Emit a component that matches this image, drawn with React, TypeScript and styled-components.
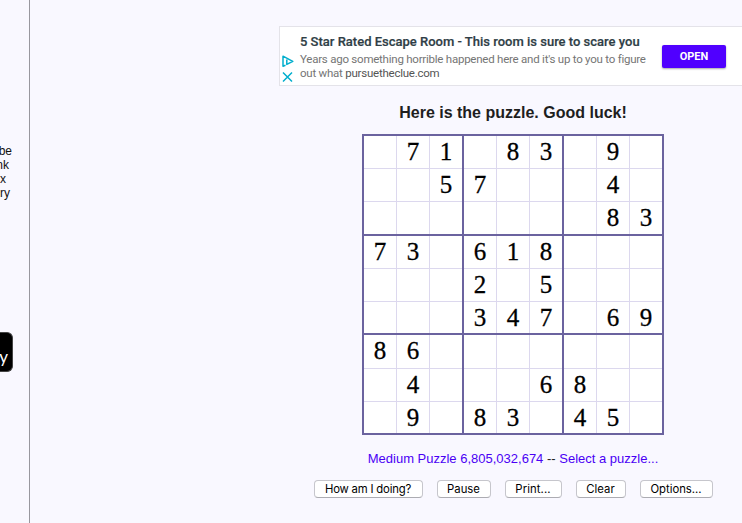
import React from "react";
import styled, { createGlobalStyle } from "styled-components";

const Global = createGlobalStyle`
  *, *::before, *::after { box-sizing: border-box; }
  body { margin: 0; background: #f9f8ff; overflow: hidden; font-family: "Liberation Sans", Arial, sans-serif; }
`;

const Page = styled.div`
  display: flex;
  width: 742px;
  height: 523px;
  overflow: hidden;
  background: #f9f8ff;
`;

const Sidebar = styled.aside`
  width: 30px;
  flex: none;
  border-right: 1px solid #98979e;
  padding-top: 144px;
  overflow: hidden;
`;

const SideLine = styled.div<{ $w: number }>`
  width: ${(p) => p.$w}px;
  font-size: 12px;
  line-height: 14px;
  color: #111;
  display: flex;
  justify-content: flex-end;
  white-space: nowrap;
`;

const StoreBadge = styled.div`
  margin-top: 132px;
  width: 13px;
  height: 40px;
  background: #000;
  border: solid #444;
  border-width: 1px 1px 1px 0;
  border-radius: 0 6px 6px 0;
  display: flex;
  justify-content: flex-end;
  padding: 14px 4px 0 0;
  color: #fff;
  font: 17px/20px Lato, sans-serif;
`;

const Main = styled.main`
  width: 712px;
  flex: none;
  padding-top: 26px;
`;

const Ad = styled.section`
  margin-left: 249px;
  width: 480px;
  height: 60px;
  background: #fff;
  border: 1px solid #e4e3e9;
  display: flex;
  font-family: Roboto, sans-serif;
`;

const AdMarks = styled.div`
  width: 20px;
  padding: 28px 0 0 2px;
  display: flex;
  flex-direction: column;
  gap: 3px;
`;

const AdCopy = styled.div`
  width: 362px;
  padding-top: 6px;
  white-space: nowrap;
`;

const AdTitle = styled.div`
  font-size: 13px;
  font-weight: 500;
  line-height: 18px;
  color: #2f3e46;
  -webkit-text-stroke: 0.2px #2f3e46;
`;

const AdText = styled.div`
  margin-top: 1px;
  font-size: 11.5px;
  letter-spacing: -0.235px;
  line-height: 14px;
  color: #757575;
`;

const Domain = styled.span`
  color: #555;
`;

const OpenButton = styled.button`
  width: 64px;
  height: 23px;
  margin-top: 18px;
  padding: 0;
  border: 0;
  border-radius: 2px;
  background: #5000ff;
  color: #fff;
  font: 700 11px/23px Roboto, sans-serif;
  box-shadow: 0 1px 2px rgba(0, 0, 0, 0.35);
`;

const Game = styled.section`
  width: 302px;
  margin: 17px 0 0 332px;
  display: flex;
  flex-direction: column;
  align-items: center;
`;

const Heading = styled.h1`
  margin: 0;
  font-size: 16px;
  line-height: 20px;
  font-weight: 700;
  color: #1e1e1e;
  white-space: nowrap;
`;

const Board = styled.div`
  margin-top: 11px;
  width: 302px;
  height: 301px;
  padding: 2px;
  background: #6b639f;
  display: grid;
  grid-template-columns: repeat(3, 98px);
  grid-template-rows: 98px 97px 98px;
  gap: 2px;
`;

const Block = styled.div<{ $first: number }>`
  background: #dcd8ee;
  display: grid;
  grid-template-columns: repeat(3, 32px);
  grid-template-rows: ${(p) => p.$first}px 32px 1fr;
  gap: 1px;
`;

const Cell = styled.div`
  background: #fff;
  font: 25px/32px "Liberation Serif", "Times New Roman", serif;
  -webkit-text-stroke: 0.3px #000;
  height: 100%;
  min-height: 0;
  text-align: center;
  color: #000;
`;

const Links = styled.div`
  margin-top: 15px;
  font-size: 13px;
  line-height: 18px;
  color: #222;
  white-space: nowrap;
`;

const Link = styled.a`
  color: #4a00f5;
`;

const Buttons = styled.div`
  margin-top: 12px;
  display: flex;
  gap: 14px;
`;

const Button = styled.button<{ $w: number; $tracking?: number }>`
  width: ${(p) => p.$w}px;
  height: 18px;
  flex: none;
  padding: 0;
  border: 1px solid #c6c6cc;
  border-bottom-color: #acacb2;
  border-radius: 4px;
  background: #fff;
  color: #000;
  font: 11.3px/15px Inter, sans-serif;
  letter-spacing: ${(p) => p.$tracking ?? 0}px;
  white-space: nowrap;
`;

const rows = [
  ".71.83.9.",
  "..57...4.",
  ".......83",
  "73.618...",
  "...2.5...",
  "...347.69",
  "86.......",
  ".4...68..",
  ".9.83.45.",
];

const sideLines = [
  { text: "be", w: 12 },
  { text: "ink", w: 9 },
  { text: "ux", w: 6 },
  { text: "ery", w: 10 },
];

const actions = [
  { label: "How am I doing?", w: 109, tracking: -0.18 },
  { label: "Pause", w: 54 },
  { label: "Print...", w: 57, tracking: 0.1 },
  { label: "Clear", w: 50 },
  { label: "Options...", w: 73 },
];

const blockCells = (b: number) =>
  Array.from({ length: 9 }, (_, i) => rows[Math.floor(b / 3) * 3 + Math.floor(i / 3)][(b % 3) * 3 + (i % 3)]);

export default function App() {
  return (
    <Page>
      <Global />
      <Sidebar>
        {sideLines.map((l) => (
          <SideLine key={l.text} $w={l.w}>{l.text}</SideLine>
        ))}
        <StoreBadge>y</StoreBadge>
      </Sidebar>
      <Main>
        <Ad>
          <AdMarks>
            <svg width="12" height="13" viewBox="0 0 12 13" fill="none" stroke="#00aecd" strokeWidth="1.5">
              <path d="M3.5 10.2 1 11.2V1.2L10.8 6.3 4.8 9.4V4.4" strokeLinejoin="round" />
            </svg>
            <svg width="12" height="12" viewBox="0 0 12 12" fill="none" stroke="#00aecd" strokeWidth="1.5">
              <path d="M1 1.5l9 9M10 1.5l-9 9" />
            </svg>
          </AdMarks>
          <AdCopy>
            <AdTitle>5 Star Rated Escape Room - This room is sure to scare you</AdTitle>
            <AdText>
              Years ago something horrible happened here and it's up to you to figure
              <br />
              out what <Domain>pursuetheclue.com</Domain>
            </AdText>
          </AdCopy>
          <OpenButton>OPEN</OpenButton>
        </Ad>
        <Game>
          <Heading>Here is the puzzle. Good luck!</Heading>
          <Board>
            {rows.map((_, b) => (
              <Block key={b} $first={b >= 6 ? 33 : 32}>
                {blockCells(b).map((c, i) => (
                  <Cell key={i}>{c === "." ? "" : c}</Cell>
                ))}
              </Block>
            ))}
          </Board>
          <Links>
            <Link>Medium Puzzle 6,805,032,674</Link> -- <Link>Select a puzzle...</Link>
          </Links>
          <Buttons>
            {actions.map((a) => (
              <Button key={a.label} $w={a.w} $tracking={a.tracking}>{a.label}</Button>
            ))}
          </Buttons>
        </Game>
      </Main>
    </Page>
  );
}
